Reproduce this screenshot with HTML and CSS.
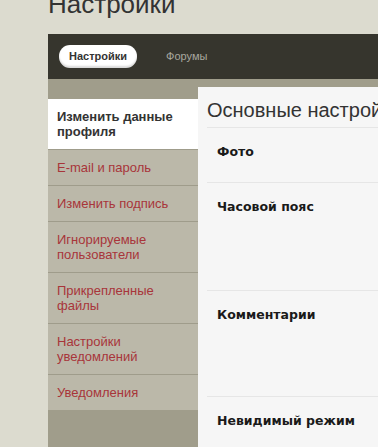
FILE: index.html
```html
<!DOCTYPE html>
<html lang="ru">
<head>
    <meta charset="UTF-8">
    <meta name="viewport" content="width=device-width, initial-scale=1.0">
    <title>Настройки</title>
    <link rel="stylesheet" href="styles.css">
</head>
<body>
    <div class="page">
        <h1>Настройки</h1>

        <div class="panel">
            <!-- Навигация -->
            <div class="tabs">
                <a class="tab active" href="#">Настройки</a>
                <a class="tab" href="#">Форумы</a>
            </div>

            <div class="panel-body">
                <!-- Меню слева -->
                <ul class="side-menu">
                    <li class="active"><a href="#">Изменить данные профиля</a></li>
                    <li><a href="#">E-mail и пароль</a></li>
                    <li><a href="#">Изменить подпись</a></li>
                    <li><a href="#">Игнорируемые пользователи</a></li>
                    <li><a href="#">Прикрепленные файлы</a></li>
                    <li><a href="#">Настройки уведомлений</a></li>
                    <li><a href="#">Уведомления</a></li>
                </ul>

                <!-- Основной блок -->
                <div class="content">
                    <h2>Основные настройки</h2>
                    <div class="field field-photo"><span class="label">Фото</span></div>
                    <div class="field field-tz"><span class="label">Часовой пояс</span></div>
                    <div class="field field-comments"><span class="label">Комментарии</span></div>
                    <div class="field"><span class="label">Невидимый режим</span></div>
                </div>
            </div>
        </div>
    </div>
</body>
</html>
```

FILE: styles.css
```css
* {
    margin: 0;
    padding: 0;
    box-sizing: border-box;
}

body {
    font-family: "Liberation Sans", Arial, sans-serif;
    background: #dcdbcf;
    color: #333;
    overflow: hidden;
}

.page {
    padding-left: 48px;
    width: 900px;
}

h1 {
    font-size: 26px;
    font-weight: normal;
    line-height: 30px;
    color: #333;
    margin-top: -11px;
    margin-bottom: 15px;
}

.panel {
    width: 700px;
}

/* Onglets */
.tabs {
    background: #36352d;
    height: 45px;
    padding: 11px 0 0 11px;
    display: flex;
    align-items: flex-start;
}

.tab {
    font-size: 11px;
    line-height: 23px;
    height: 23px;
    color: #a9a89f;
    text-decoration: none;
    margin-right: 19px;
}

.tab.active {
    background: #fff;
    color: #333;
    font-weight: bold;
    padding: 0 10px;
    border-radius: 11px;
    box-shadow: inset 0 -2px 2px rgba(0, 0, 0, 0.15);
    margin-right: 29px;
}

.panel-body {
    background: #a09d8b;
    display: flex;
    align-items: flex-start;
    padding-top: 8px;
    min-height: 400px;
}

/* Menu */
.side-menu {
    list-style: none;
    width: 150px;
    margin-top: 12px;
    flex-shrink: 0;
}

.side-menu li {
    background: #bbb8a9;
    border-bottom: 1px solid #9f9c8b;
}

.side-menu li a {
    display: block;
    padding: 10px 20px 10px 9px;
    font-size: 13px;
    line-height: 15px;
    color: #a8353a;
    text-decoration: none;
}

.side-menu li.active {
    background: #fff;
}

.side-menu li.active a {
    color: #333;
    font-weight: bold;
}

.side-menu li:last-child {
    border-bottom: none;
}

/* Contenu */
.content {
    background: #f6f6f6;
    flex: 1;
    padding: 11px 9px 0 9px;
    min-height: 400px;
}

.content h2 {
    font-size: 20px;
    font-weight: normal;
    line-height: 24px;
    color: #333;
    margin-bottom: 5px;
    white-space: nowrap;
}

.field {
    border-top: 1px solid #e6e6e6;
    padding: 14px 0 0 10px;
    height: 106px;
}

.field-photo {
    height: 55px;
}

.field-tz {
    height: 108px;
}

.label {
    font-family: "DejaVu Sans", Verdana, sans-serif;
    font-size: 12.5px;
    line-height: 16px;
    font-weight: bold;
    color: #1a1a1a;
}
```
